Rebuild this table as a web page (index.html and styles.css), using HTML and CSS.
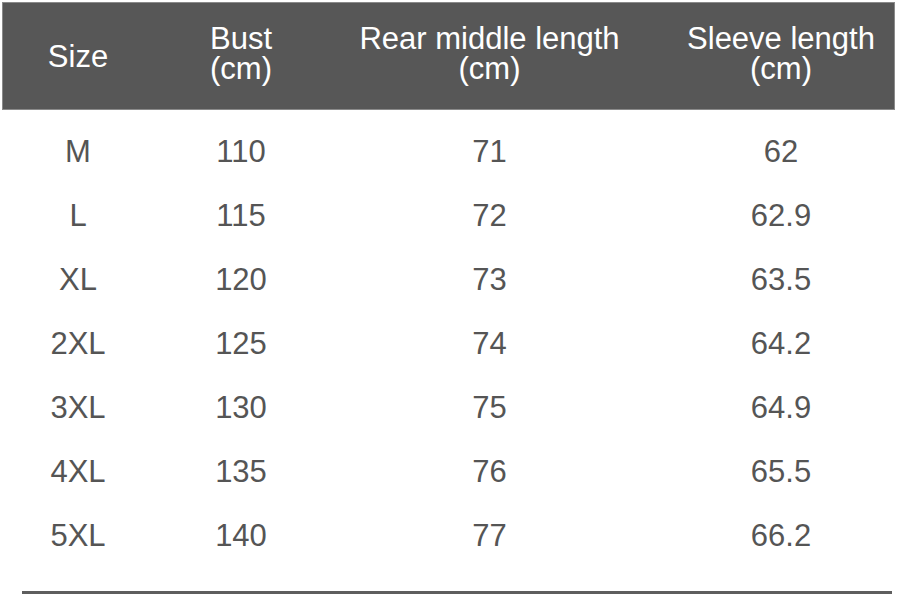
FILE: index.html
```html
<!DOCTYPE html>
<html>
<head>
<meta charset="utf-8">
<link rel="stylesheet" href="styles.css">
</head>
<body>
<div class="chart">
  <div class="row head">
    <div class="cell single">Size</div>
    <div class="cell multi">Bust<br>(cm)</div>
    <div class="cell multi">Rear middle length<br>(cm)</div>
    <div class="cell multi last">Sleeve length<br>(cm)</div>
  </div>
  <div class="body">
    <div class="row"><div class="cell">M</div><div class="cell">110</div><div class="cell">71</div><div class="cell last">62</div></div>
    <div class="row"><div class="cell">L</div><div class="cell">115</div><div class="cell">72</div><div class="cell last">62.9</div></div>
    <div class="row"><div class="cell">XL</div><div class="cell">120</div><div class="cell">73</div><div class="cell last">63.5</div></div>
    <div class="row"><div class="cell">2XL</div><div class="cell">125</div><div class="cell">74</div><div class="cell last">64.2</div></div>
    <div class="row"><div class="cell">3XL</div><div class="cell">130</div><div class="cell">75</div><div class="cell last">64.9</div></div>
    <div class="row"><div class="cell">4XL</div><div class="cell">135</div><div class="cell">76</div><div class="cell last">65.5</div></div>
    <div class="row"><div class="cell">5XL</div><div class="cell">140</div><div class="cell">77</div><div class="cell last">66.2</div></div>
  </div>
  <div class="rule"></div>
</div>
</body>
</html>
```
FILE: styles.css
```css
html, body {
  margin: 0;
  padding: 0;
  background: #ffffff;
}
body {
  font-family: "Liberation Sans", Arial, sans-serif;
  font-size: 31px;
  color: #555555;
}
.chart {
  padding: 2px 0 0 2px;
  width: 893px;
}
.row {
  display: grid;
  grid-template-columns: 152px 174px 323px 244px;
  height: 64px;
  align-items: center;
}
.cell {
  text-align: center;
  line-height: 64px;
  white-space: nowrap;
}
.cell.last {
  padding-left: 16px;
}
.head {
  height: 108px;
  background: #575757;
  color: #ffffff;
  box-shadow: inset 0 0 0 1px #8a8a8a;
}
.head .cell {
  line-height: 30px;
}
.head .single {
  margin-top: 2px;
}
.head .multi {
  margin-bottom: 5px;
}
.body {
  padding-top: 10px;
}
.rule {
  margin: 23px 0 0 20px;
  width: 870px;
  height: 3px;
  background: #5e5e5e;
}
```
